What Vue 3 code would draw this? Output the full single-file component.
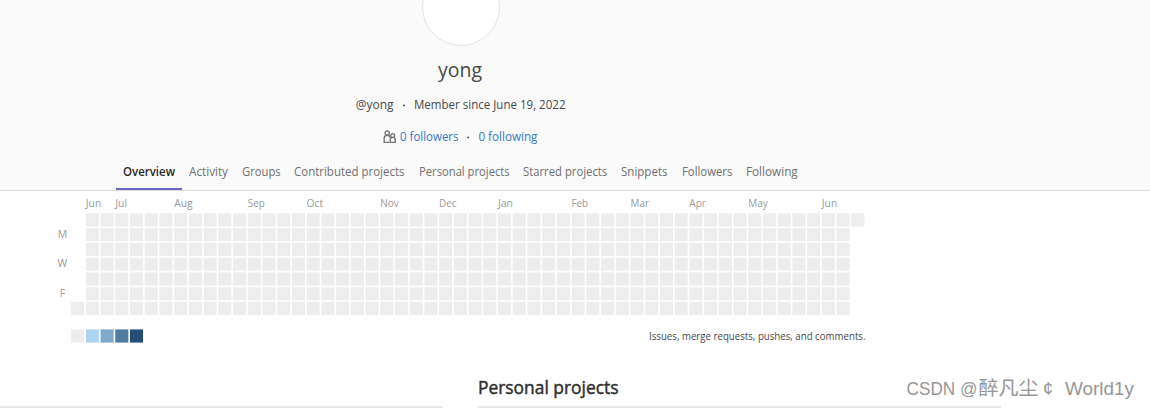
<script setup>
const tabs = [
  { label: 'Overview', width: 52 },
  { label: 'Activity', width: 39 },
  { label: 'Groups', width: 38.7 },
  { label: 'Contributed projects', width: 110.5 },
  { label: 'Personal projects', width: 90.7 },
  { label: 'Starred projects', width: 84.2 },
  { label: 'Snippets', width: 46.5 },
  { label: 'Followers', width: 50.3 },
  { label: 'Following', width: 51.7 },
]
const pitch = 14.72
const months = [
  ['Jun', 1, 15.5], ['Jul', 3, 12], ['Aug', 7, 18.5], ['Sep', 12, 17], ['Oct', 16, 16.5],
  ['Nov', 21, 18.5], ['Dec', 25, 17.5], ['Jan', 29, 15], ['Feb', 34, 16.5], ['Mar', 38, 18.5],
  ['Apr', 42, 16.5], ['May', 46, 19.5], ['Jun', 51, 15.5],
]
const days = [['M', 1], ['W', 3], ['F', 5]]
const cells = []
for (let week = 0; week < 54; week++) {
  for (let day = 0; day < 7; day++) {
    if ((week === 0 && day < 6) || (week === 53 && day > 0)) continue
    cells.push({ x: 21.1 + week * pitch, y: 22.4 + day * 14.75 })
  }
}
const legend = ['#ededed', '#acd5f2', '#7fa8c9', '#527ba0', '#254e77']
</script>

<template>
  <main class="page">
    <header class="profile">
      <div class="avatar"></div>
      <h1><svg width="46" height="30"><text x="1" y="22" textLength="44" lengthAdjust="spacingAndGlyphs">yong</text></svg></h1>
      <p class="meta">
        <svg width="212" height="20">
          <text x="0.7" y="14" textLength="37.8" lengthAdjust="spacingAndGlyphs">@yong</text>
          <circle cx="49" cy="10.5" r="1" />
          <text x="59" y="14" textLength="151.5" lengthAdjust="spacingAndGlyphs">Member since June 19, 2022</text>
        </svg>
      </p>
      <p class="links">
        <svg class="people" width="14" height="14" viewBox="0 0 14 14">
          <circle cx="4.2" cy="3.1" r="2.1" />
          <path d="M6.4 12.4H1.2V8.2C1.2 6.2 2.2 5.2 4.2 5.2S7 6.2 7 7.8" />
          <circle cx="9.7" cy="5.5" r="1.9" />
          <path d="M7.2 12.4V9.9C7.2 8.2 8 7.4 9.8 7.4S12.3 8.2 12.3 9.9V12.4Z" />
        </svg>
        <svg width="140" height="20">
          <text x="0" y="14" textLength="58.5" lengthAdjust="spacingAndGlyphs">0 followers</text>
          <circle cx="68.3" cy="10.5" r="1" />
          <text x="78.4" y="14" textLength="59" lengthAdjust="spacingAndGlyphs">0 following</text>
        </svg>
      </p>
      <nav class="tabs">
        <a v-for="(tab, i) in tabs" :key="tab.label" :class="{ active: i === 0 }">
          <svg :width="tab.width" height="20"><text x="0" y="14" :textLength="tab.width" lengthAdjust="spacingAndGlyphs">{{ tab.label }}</text></svg>
        </a>
      </nav>
    </header>

    <section class="calendar">
      <svg class="graph" width="820" height="130">
        <text v-for="m in months" :key="m[1]" :x="21.1 + m[1] * pitch" y="16" :textLength="m[2]" lengthAdjust="spacingAndGlyphs">{{ m[0] }}</text>
        <text v-for="d in days" :key="d[0]" x="12.4" :y="32.2 + d[1] * 14.75" text-anchor="middle">{{ d[0] }}</text>
        <rect v-for="(c, i) in cells" :key="i" :x="c.x" :y="c.y" width="13.1" height="13.1" />
      </svg>
      <div class="below">
        <svg width="76" height="14">
          <rect v-for="(color, i) in legend" :key="color" :x="1.1 + i * pitch" y="0.4" width="13.1" height="13.2" :fill="color" />
        </svg>
        <svg class="caption" width="217" height="16"><text x="0" y="10.5" textLength="216.5" lengthAdjust="spacingAndGlyphs">Issues, merge requests, pushes, and comments.</text></svg>
      </div>
    </section>

    <section class="lists">
      <div class="column activity"></div>
      <div class="column projects">
        <h2><svg width="142" height="28"><text x="0" y="20" textLength="140.5" lengthAdjust="spacingAndGlyphs">Personal projects</text></svg></h2>
      </div>
    </section>
    <svg class="watermark" width="232" height="30">
      <text x="0.5" y="21" textLength="71" lengthAdjust="spacingAndGlyphs">CSDN @</text>
      <text x="72.5" y="21" textLength="60" lengthAdjust="spacingAndGlyphs" class="han">醉凡尘</text>
      <text x="137" y="21" textLength="10" lengthAdjust="spacingAndGlyphs">¢</text>
      <text x="159" y="21" textLength="69" lengthAdjust="spacingAndGlyphs">World1y</text>
    </svg>
  </main>
</template>

<style>
body { background: #fff; overflow: hidden; }
</style>

<style scoped>
.page { position: relative; height: 408px; overflow: hidden; font-family: "Open Sans", "Noto Sans", sans-serif; }
svg { display: block; flex: none; overflow: visible; }
h1, h2, p { margin: 0; font-weight: 400; }
.profile { box-sizing: border-box; height: 191px; background: #fafafa; border-bottom: 1px solid #dcdcdc; display: flex; flex-direction: column; }
.avatar { box-sizing: border-box; width: 78px; height: 78px; margin: -32px 0 0 422px; border: 1.5px solid #e4e4e4; border-radius: 50%; background: #fff; flex: none; }
h1 { margin: 9px 0 0 437px; font-size: 20px; fill: #484848; }
.meta { margin: 10px 0 0 355px; font-size: 12.3px; fill: #484848; }
.links { display: flex; margin: 12px 0 0 383px; font-size: 12.3px; fill: #3578c6; }
.links circle { fill: #555; }
.people { margin: 3px 3px 0 0; stroke: #777; stroke-width: 1.4; fill: none; }
.links .people circle { fill: none; }
.tabs { display: flex; margin: 7px 0 0 116px; height: 36px; font-size: 12.3px; fill: #707070; }
.tabs a { box-sizing: border-box; padding: 8px 6.93px 0; height: 36px; }
.tabs .active { padding: 8px 7px 0; border-bottom: 2px solid #6666c4; fill: #282828; font-weight: 600; }
.calendar { width: 820px; margin-left: 50px; }
.graph { font-size: 10.5px; fill: #999; }
.graph rect { fill: #ededed; }
.below { display: flex; justify-content: space-between; padding: 8px 4px 0 20px; }
.caption { font-size: 10.5px; fill: #484848; }
.lists { display: flex; gap: 35px; height: 63px; }
.column { box-sizing: border-box; height: 63px; border-bottom: 2px solid #e8e8e8; }
.activity { width: 443px; }
.projects { width: 523px; padding-top: 29px; }
h2 { font-size: 17.3px; font-weight: 400; fill: #303030; stroke: #303030; stroke-width: 0.45; }
.watermark { position: absolute; left: 906px; top: 374px; font-family: "Liberation Sans", "Noto Sans CJK SC", sans-serif; font-size: 19px; fill: #969696; }
.han { font-family: "Noto Sans CJK SC", sans-serif; font-size: 19.5px; font-weight: 400; }
</style>
